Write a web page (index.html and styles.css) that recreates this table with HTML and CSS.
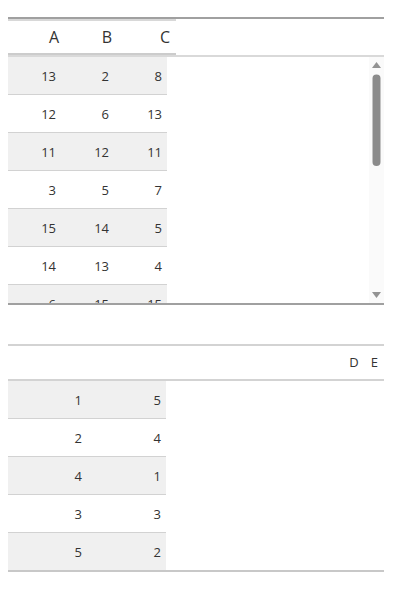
FILE: index.html
```html
<!DOCTYPE html>
<html>
<head>
<meta charset="utf-8">
<link rel="stylesheet" href="styles.css">
</head>
<body>
<div class="grid grid-top">
  <div class="ghead">
    <div class="hcells">
      <div class="hc hc1">A</div><div class="hc hc2">B</div><div class="hc hc3">C</div>
    </div>
  </div>
  <div class="gbody">
    <div class="rows rows-top">
      <div class="row odd"><div class="cell">13</div><div class="cell">2</div><div class="cell">8</div></div>
      <div class="row"><div class="cell">12</div><div class="cell">6</div><div class="cell">13</div></div>
      <div class="row odd"><div class="cell">11</div><div class="cell">12</div><div class="cell">11</div></div>
      <div class="row"><div class="cell">3</div><div class="cell">5</div><div class="cell">7</div></div>
      <div class="row odd"><div class="cell">15</div><div class="cell">14</div><div class="cell">5</div></div>
      <div class="row"><div class="cell">14</div><div class="cell">13</div><div class="cell">4</div></div>
      <div class="row odd"><div class="cell">6</div><div class="cell">15</div><div class="cell">15</div></div>
    </div>
    <div class="vscroll">
      <svg width="15" height="246" viewBox="0 0 15 246">
        <polygon points="3,11 12,11 7.5,5" fill="#939393"/>
        <rect x="3.5" y="17.5" width="8" height="91.5" rx="4" fill="#8b8b8b"/>
        <polygon points="3,235 12,235 7.5,241" fill="#939393"/>
      </svg>
    </div>
  </div>
</div>

<div class="grid grid-bottom">
  <div class="ghead2">
    <div class="hc2b">D</div><div class="hc2b">E</div>
  </div>
  <div class="rows rows-bottom">
    <div class="row odd"><div class="cell wide">1</div><div class="cell wide">5</div></div>
    <div class="row"><div class="cell wide">2</div><div class="cell wide">4</div></div>
    <div class="row odd"><div class="cell wide">4</div><div class="cell wide">1</div></div>
    <div class="row"><div class="cell wide">3</div><div class="cell wide">3</div></div>
    <div class="row odd last"><div class="cell wide">5</div><div class="cell wide">2</div></div>
  </div>
</div>
</body>
</html>
```

FILE: styles.css
```css
html, body {
  margin: 0;
  padding: 0;
  background: #ffffff;
}
body {
  padding: 0 8px;
  font-family: "Open Sans", "Noto Sans", sans-serif;
  color: #333333;
}
.grid {
  width: 376px;
}
.grid-top {
  margin-top: 17px;
  border-top: 2px solid #a0a0a0;
  border-bottom: 2px solid #a0a0a0;
}
.ghead {
  border-bottom: 2px solid #d9d9d9;
}
.hcells {
  display: flex;
  width: 168px;
  border-top: 2px solid #d8d8d8;
  border-bottom: 2px solid #cccccc;
}
.hc {
  box-sizing: border-box;
  height: 32px;
  line-height: 32px;
  font-size: 16px;
  text-align: right;
  padding-right: 6px;
}
.hc1 { width: 57px; }
.hc2 { width: 53px; }
.hc3 { width: 58px; }
.gbody {
  display: flex;
  height: 246px;
  overflow: hidden;
}
.rows-top {
  width: 159px;
}
.rows-bottom {
  width: 158px;
}
.row {
  display: flex;
  box-sizing: border-box;
  height: 38px;
  border-bottom: 1px solid #d2d2d2;
}
.row.odd {
  background: #f0f0f0;
}
.row.last {
  border-bottom: none;
  height: 37px;
}
.cell {
  box-sizing: border-box;
  width: 53px;
  padding-right: 5px;
  padding-top: 1px;
  text-align: right;
  font-size: 13px;
  line-height: 36px;
}
.cell.wide {
  width: 79px;
}
.vscroll {
  margin-left: auto;
  width: 15px;
  height: 246px;
  background: #fafafa;
}
.vscroll svg {
  display: block;
}
.grid-bottom {
  margin-top: 39px;
  border-top: 2px solid #d3d3d3;
  border-bottom: 2px solid #c8c8c8;
}
.ghead2 {
  display: flex;
  justify-content: flex-end;
  height: 33px;
  border-bottom: 2px solid #d3d3d3;
}
.hc2b {
  font-size: 13px;
  line-height: 33px;
  padding: 0 6px;
}
```
